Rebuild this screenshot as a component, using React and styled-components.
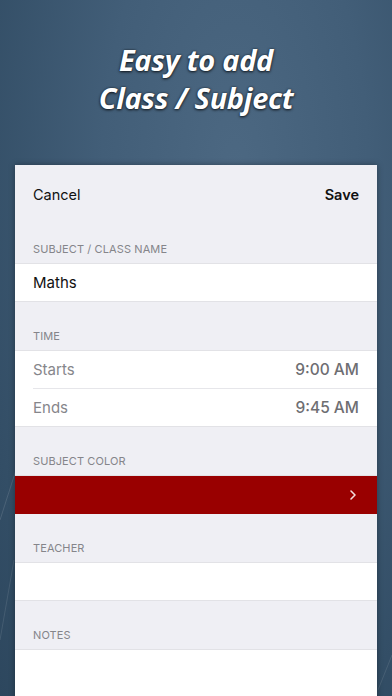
import React from "react";
import styled, { createGlobalStyle } from "styled-components";

const Global = createGlobalStyle`
  html, body { margin: 0; padding: 0; }
  body { width: 392px; height: 696px; overflow: hidden; }
  #root { width: 392px; height: 696px; }
`;

const Page = styled.div`
  position: relative;
  width: 392px;
  height: 696px;
  overflow: hidden;
  background: radial-gradient(ellipse at 60% 25%, #4c6882 0%, #425e78 40%, #334e66 80%, #2d475e 100%);
  display: flex;
  flex-direction: column;
  align-items: center;
`;

const Deco = styled.svg`
  position: absolute;
  inset: 0;
  pointer-events: none;
`;

const Title = styled.h1`
  margin: 0;
  padding-top: 41px;
  height: 165px;
  flex-shrink: 0;
  box-sizing: border-box;
  text-align: center;
  color: #fff;
  font-family: "Open Sans", "Lato", sans-serif;
  font-style: italic;
  font-weight: 700;
  font-size: 29px;
  line-height: 38px;
  letter-spacing: -0.3px;
  text-shadow: 0 1px 3px rgba(0, 0, 0, 0.75), 0 0 2px rgba(0, 0, 0, 0.5);
`;

const Card = styled.div`
  position: relative;
  width: 362px;
  flex: 1;
  background: #efeff4;
  box-shadow: 0 0 6px rgba(0, 0, 0, 0.35);
  display: flex;
  flex-direction: column;
  font-family: "Inter", "Roboto", sans-serif;
`;

const NavBar = styled.div`
  height: 50px;
  flex-shrink: 0;
  padding: 21px 18px 0;
  box-sizing: border-box;
  display: flex;
  justify-content: space-between;
  align-items: flex-start;
  font-size: 14.5px;
  line-height: 18px;
  color: #111;
`;

const NavButton = styled.span`
  font-weight: ${(p) => (p.$bold ? 600 : 400)};
`;

const SectionHeader = styled.div`
  height: 49px;
  flex-shrink: 0;
  padding: 0 18px 7px;
  box-sizing: border-box;
  display: flex;
  align-items: flex-end;
  font-size: 11px;
  line-height: 13px;
  color: #85858a;
  letter-spacing: 0.1px;
  border-bottom: 1px solid #e2e2e6;
`;

const Group = styled.div`
  flex-shrink: 0;
  background: #fff;
  border-bottom: 1px solid #e2e2e6;
`;

const Row = styled.div`
  height: ${(p) => p.$h || 37}px;
  margin-left: 18px;
  padding-right: 18px;
  display: flex;
  align-items: center;
  justify-content: space-between;
  font-size: 15px;
  color: ${(p) => p.$color || "#111"};
  border-bottom: ${(p) => (p.$divider ? "1px solid #e6e6ea" : "none")};
`;

const Value = styled.span`
  color: #6e6e72;
  font-size: 15.5px;
  font-weight: 500;
`;

const ColorRow = styled.div`
  height: 38px;
  flex-shrink: 0;
  background: #990000;
  display: flex;
  align-items: center;
  justify-content: flex-end;
  padding-right: 20px;
`;

const Notes = styled.div`
  flex: 1;
  min-height: 60px;
  background: #fff;
`;

export default function App() {
  return (
    <Page>
      <Global />
      <Deco width="392" height="696" viewBox="0 0 392 696">
        <path d="M0 520 L16 470" stroke="rgba(255,255,255,0.12)" strokeWidth="1" />
        <path d="M0 640 L14 560" stroke="rgba(255,255,255,0.1)" strokeWidth="1" />
        <path d="M378 690 L392 655" stroke="rgba(255,255,255,0.1)" strokeWidth="1" />
      </Deco>
      <Title>
        Easy to add
        <br />
        Class / Subject
      </Title>
      <Card>
        <NavBar>
          <NavButton>Cancel</NavButton>
          <NavButton $bold>Save</NavButton>
        </NavBar>
        <SectionHeader>SUBJECT / CLASS NAME</SectionHeader>
        <Group>
          <Row>Maths</Row>
        </Group>
        <SectionHeader>TIME</SectionHeader>
        <Group>
          <Row $divider $color="#86868b">
            Starts <Value>9:00 AM</Value>
          </Row>
          <Row $color="#86868b">
            Ends <Value>9:45 AM</Value>
          </Row>
        </Group>
        <SectionHeader>SUBJECT COLOR</SectionHeader>
        <ColorRow>
          <svg width="8" height="12" viewBox="0 0 8 12">
            <path d="M2 2 L6 6 L2 10" fill="none" stroke="#f3dede" strokeWidth="1.6" strokeLinecap="round" strokeLinejoin="round" />
          </svg>
        </ColorRow>
        <SectionHeader>TEACHER</SectionHeader>
        <Group>
          <Row />
        </Group>
        <SectionHeader>NOTES</SectionHeader>
        <Notes />
      </Card>
    </Page>
  );
}
